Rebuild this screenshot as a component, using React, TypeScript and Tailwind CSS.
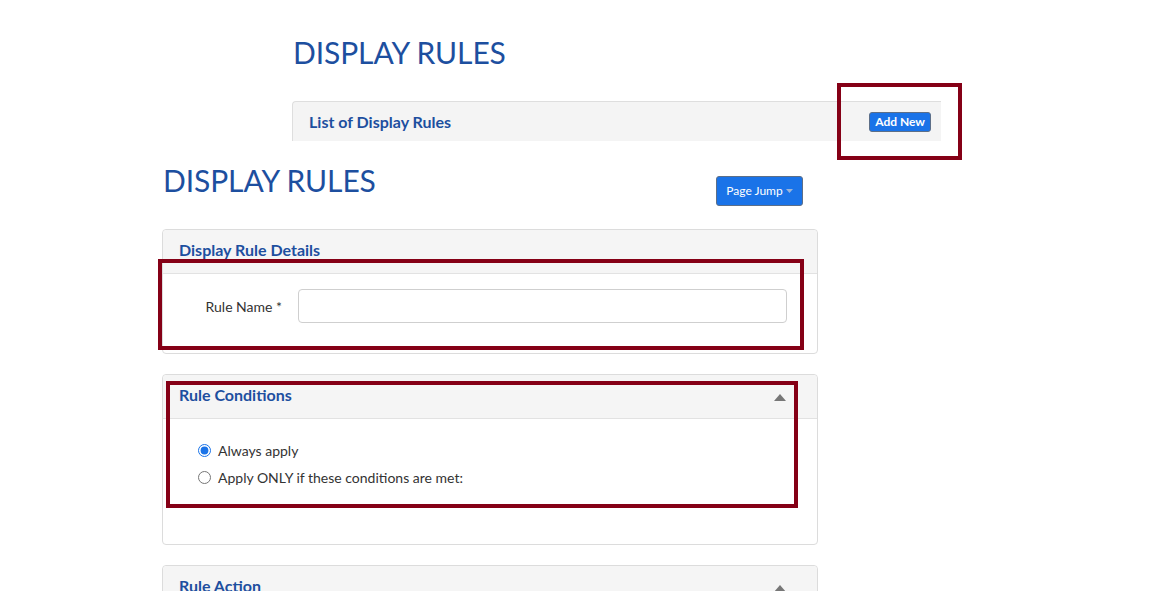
function CaretUp() {
  return (
    <svg width="12" height="7" viewBox="0 0 12 7" className="block">
      <path d="M0 7 L6 0 L12 7 Z" fill="#777" />
    </svg>
  );
}

function PanelHeader({ title, caret }: { title: string; caret?: boolean }) {
  return (
    <div className="flex items-center h-[44px] px-4 pb-[4px] bg-[#f5f5f5] border-b border-[#e2e2e2] rounded-t-[4px]">
      <h3 className="text-[16px] font-bold text-[#1d4f9f] leading-none">{title}</h3>
      {caret && (
        <div className="ml-auto mr-[15px] mt-[5px]">
          <CaretUp />
        </div>
      )}
    </div>
  );
}

export default function App() {
  return (
    <div
      className="relative w-full h-[591px] overflow-hidden bg-white text-[#333]"
      style={{ fontFamily: 'Lato, "Open Sans", sans-serif' }}
    >
      {/* cropped screenshot of list page */}
      <div className="ml-[292px] w-[649px] pt-[34px]">
        <h1 className="text-[30px] leading-[36px] font-normal text-[#1d4f9f] pl-[1px] tracking-[-0.1px]">DISPLAY RULES</h1>
        <div className="mt-[31px] h-[40px] flex items-center pl-4 pr-[10px] bg-[#f4f4f4] border-t border-l border-[#dedede] rounded-tl-[4px]">
          <span className="text-[16px] font-bold text-[#1d4f9f]">List of Display Rules</span>
          <button className="ml-auto h-[20px] px-[5px] rounded-[3px] bg-[#1a73e8] border border-[#5d6f88] text-white text-[12px] font-bold leading-none">
            Add New
          </button>
        </div>
      </div>

      {/* edit page */}
      <div className="ml-[162px] w-[656px] mt-[21px]">
        <div className="flex items-start h-[44px]">
          <h1 className="text-[30px] leading-[36px] font-normal text-[#1d4f9f] pl-[1px] tracking-[-0.1px]">DISPLAY RULES</h1>
          <button className="ml-auto mr-[15px] mt-[14px] h-[30px] w-[87px] flex items-center justify-center gap-[3px] rounded-[3px] bg-[#1a73e8] border border-[#5d6f88] text-white text-[12px] leading-none">
            Page Jump
            <svg width="7" height="4" viewBox="0 0 7 4">
              <path d="M0 0 L7 0 L3.5 4 Z" fill="#9bb4d8" />
            </svg>
          </button>
        </div>

        <div className="mt-[23px] border border-[#dcdcdc] rounded-[4px] bg-white">
          <PanelHeader title="Display Rule Details" />
          <div className="flex items-start h-[79px] pt-[15px] pr-[30px]">
            <label className="w-[121px] h-[34px] flex items-center justify-end text-[14px] text-[#333] pr-[2px]">Rule Name *</label>
            <input
              type="text"
              className="ml-[14px] flex-1 h-[34px] border border-[#cfcfcf] rounded-[4px] px-3 text-[13px] outline-none"
            />
          </div>
        </div>

        <div className="mt-[20px] border border-[#dcdcdc] rounded-[4px] bg-white">
          <PanelHeader title="Rule Conditions" caret />
          <div className="h-[125px] pl-[35px] pt-[22px] flex flex-col gap-[9px]">
            <label className="flex items-center gap-[7px] text-[14px] text-[#333] h-[18px]">
              <input type="radio" name="cond" defaultChecked className="w-[13px] h-[13px] m-0 accent-[#1a73e8]" />
              Always apply
            </label>
            <label className="flex items-center gap-[7px] text-[14px] text-[#333] h-[18px]">
              <input type="radio" name="cond" className="w-[13px] h-[13px] m-0 accent-[#1a73e8]" />
              Apply ONLY if these conditions are met:
            </label>
          </div>
        </div>

        <div className="mt-[20px] border border-[#dcdcdc] rounded-[4px] bg-white">
          <PanelHeader title="Rule Action" caret />
          <div className="h-[60px]" />
        </div>
      </div>

      {/* annotation boxes */}
      <div className="absolute left-[837px] top-[83px] w-[125px] h-[77px] border-[4px] border-[#850016]" />
      <div className="absolute left-[158px] top-[259px] w-[646px] h-[91px] border-[4px] border-[#850016]" />
      <div className="absolute left-[166px] top-[381px] w-[632px] h-[127px] border-[4px] border-[#850016]" />
    </div>
  );
}
